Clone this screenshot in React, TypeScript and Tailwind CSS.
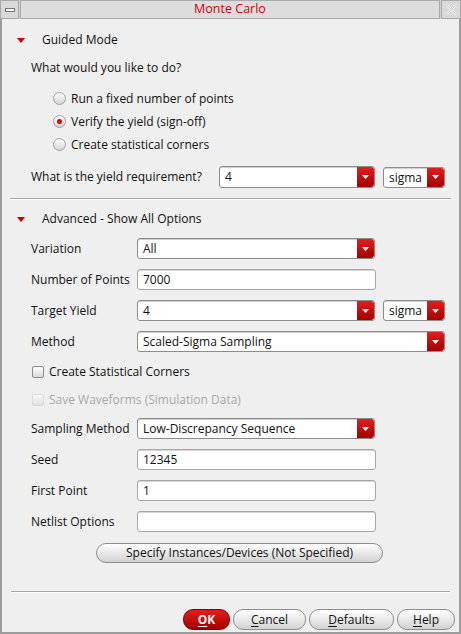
import React from 'react';

function Arrow() {
  return (
    <div className="flex w-[17px] shrink-0 items-center justify-center rounded-r-[3px] bg-linear-to-b from-[#e81c1c] to-[#a30000]">
      <svg width="7" height="4" viewBox="0 0 7 4">
        <path d="M0 0h7L3.5 4z" fill="#fff" />
      </svg>
    </div>
  );
}

function Combo({ value, className }: { value: string; className: string }) {
  return (
    <div
      className={`flex h-[21px] shrink-0 items-stretch overflow-hidden rounded-[3px] border border-[#8c8c8c] bg-white shadow-[inset_0_1px_0_#cfcfcf] ${className}`}
    >
      <span className="flex-1 pl-[5px] leading-[19px] whitespace-nowrap">{value}</span>
      <Arrow />
    </div>
  );
}

function Input({ value }: { value: string }) {
  return (
    <div className="h-[21px] w-[239px] shrink-0 rounded-[3px] border border-[#a6a6a6] bg-white pl-[5px] leading-[19px] shadow-[inset_0_1px_0_#d6d6d6]">
      {value}
    </div>
  );
}

function Radio({ label, checked }: { label: string; checked?: boolean }) {
  return (
    <div className="flex h-[23px] items-center pl-[51px]">
      <span className="flex h-[13px] w-[13px] items-center justify-center rounded-full border border-[#a0a0a0] bg-linear-to-b from-white to-[#d4d4d4]">
        {checked && <span className="h-[5px] w-[5px] rounded-full bg-[#e00000]" />}
      </span>
      <span className="ml-[5px]">{label}</span>
    </div>
  );
}

function Check({ label, disabled, className }: { label: string; disabled?: boolean; className: string }) {
  return (
    <div className={`flex items-center pl-[30px] ${disabled ? 'text-[#a8a8a8]' : ''} ${className}`}>
      <span
        className={`h-[12px] w-[12px] rounded-[2px] border bg-linear-to-b from-white to-[#d8d8d8] ${
          disabled ? 'border-[#cccccc] opacity-60' : 'border-[#8c8c8c]'
        }`}
      />
      <span className="ml-[5px]">{label}</span>
    </div>
  );
}

function Row({ label, children }: { label: string; children: React.ReactNode }) {
  return (
    <div className="flex h-[31px] items-center pl-[29px]">
      <span className="w-[106px] shrink-0 whitespace-nowrap">{label}</span>
      {children}
    </div>
  );
}

function Heading({ label }: { label: string }) {
  return (
    <div className="flex h-[20px] items-center pl-[15px]">
      <svg width="8" height="5" viewBox="0 0 8 5">
        <path d="M0 0h8L4 5z" fill="#c80000" />
      </svg>
      <span className="ml-[17px]">{label}</span>
    </div>
  );
}

function Btn({ label, u, className }: { label: string; u: string; className: string }) {
  const rest = label.slice(1);
  return (
    <div
      className={`flex h-[21px] items-center justify-center rounded-[10px] border border-[#8e8e8e] bg-linear-to-b from-white to-[#d2d2d2] ${className}`}
    >
      <span className="underline decoration-1 underline-offset-2">{u}</span>
      {rest}
    </div>
  );
}

export default function App() {
  return (
    <div className="flex h-[634px] w-[461px] flex-col bg-[#efefef] font-['Open_Sans',sans-serif] text-[12px] text-[#111]">
      {/* title bar */}
      <div className="flex h-[19px] bg-[#cfcfcf]">
        <div className="flex w-[19px] items-center justify-center border border-[#a9a9a9] bg-[#d9d9d9]">
          <span className="h-[4px] w-[10px] border border-[#777] bg-white" />
        </div>
        <div className="ml-px flex flex-1 items-center justify-center border border-[#a9a9a9] bg-[#dddddd] text-[12.5px] text-[#d40000]">
          Monte Carlo
        </div>
        <div className="ml-px flex w-[20px] items-center justify-center border border-[#a9a9a9] bg-[#d9d9d9]">
          <svg width="11" height="11" viewBox="0 0 11 11">
            <path d="M1 1l9 9M10 1L1 10" stroke="#f4f4f4" strokeWidth="2.4" />
            <path d="M1 1l9 9M10 1L1 10" stroke="#bdbdbd" strokeWidth="0.8" />
          </svg>
        </div>
      </div>

      <div className="flex flex-1 flex-col border-x-2 border-b-2 border-[#9c9c9c]">
        <div className="mt-[11px]">
          <Heading label="Guided Mode" />
        </div>
        <div className="mt-[8px] flex h-[20px] items-center pl-[29px]">What would you like to do?</div>
        <div className="mt-[9px]">
          <Radio label="Run a fixed number of points" />
          <Radio label="Verify the yield (sign-off)" checked />
          <Radio label="Create statistical corners" />
        </div>
        <div className="mt-[10px] flex h-[22px] items-center pl-[29px]">
          <span className="w-[188px] shrink-0">What is the yield requirement?</span>
          <Combo value="4" className="h-[22px] w-[156px] border-[#6e6e6e]" />
          <Combo value="sigma" className="ml-[8px] w-[62px]" />
        </div>

        <div className="mx-[8px] mt-[10px] h-[2px] border-t border-b border-t-[#a6a6a6] border-b-white" />

        <div className="mt-[9px]">
          <Heading label="Advanced - Show All Options" />
        </div>
        <div className="mt-[4px]">
          <Row label="Variation">
            <Combo value="All" className="w-[238px]" />
          </Row>
          <Row label="Number of Points">
            <Input value="7000" />
          </Row>
          <Row label="Target Yield">
            <Combo value="4" className="w-[238px]" />
            <Combo value="sigma" className="ml-[8px] w-[62px]" />
          </Row>
          <Row label="Method">
            <Combo value="Scaled-Sigma Sampling" className="w-[308px]" />
          </Row>
        </div>
        <Check label="Create Statistical Corners" className="h-[30px]" />
        <Check label="Save Waveforms (Simulation Data)" disabled className="h-[26px]" />
        <Row label="Sampling Method">
          <Combo value="Low-Discrepancy Sequence" className="w-[238px]" />
        </Row>
        <Row label="Seed">
          <Input value="12345" />
        </Row>
        <Row label="First Point">
          <Input value="1" />
        </Row>
        <Row label="Netlist Options">
          <Input value="" />
        </Row>

        <div className="mt-[6px] flex pl-[94px]">
          <div className="flex h-[20px] w-[287px] items-center justify-center rounded-[10px] border border-[#8e8e8e] bg-linear-to-b from-white to-[#d2d2d2]">
            Specify Instances/Devices (Not Specified)
          </div>
        </div>

        <div className="mx-[9px] mt-[28px] h-[2px] border-t border-b border-t-[#a6a6a6] border-b-white" />

        <div className="mt-[16px] flex justify-end gap-[3px] pr-[4px]">
          <div className="flex h-[21px] w-[47px] items-center justify-center rounded-[10px] border border-[#7a0000] bg-linear-to-b from-[#e81c1c] to-[#a30000] font-bold text-white">
            <span className="underline decoration-1 underline-offset-2">O</span>K
          </div>
          <Btn label="Cancel" u="C" className="w-[73px]" />
          <Btn label="Defaults" u="D" className="w-[85px]" />
          <Btn label="Help" u="H" className="w-[58px]" />
        </div>
      </div>
    </div>
  );
}
